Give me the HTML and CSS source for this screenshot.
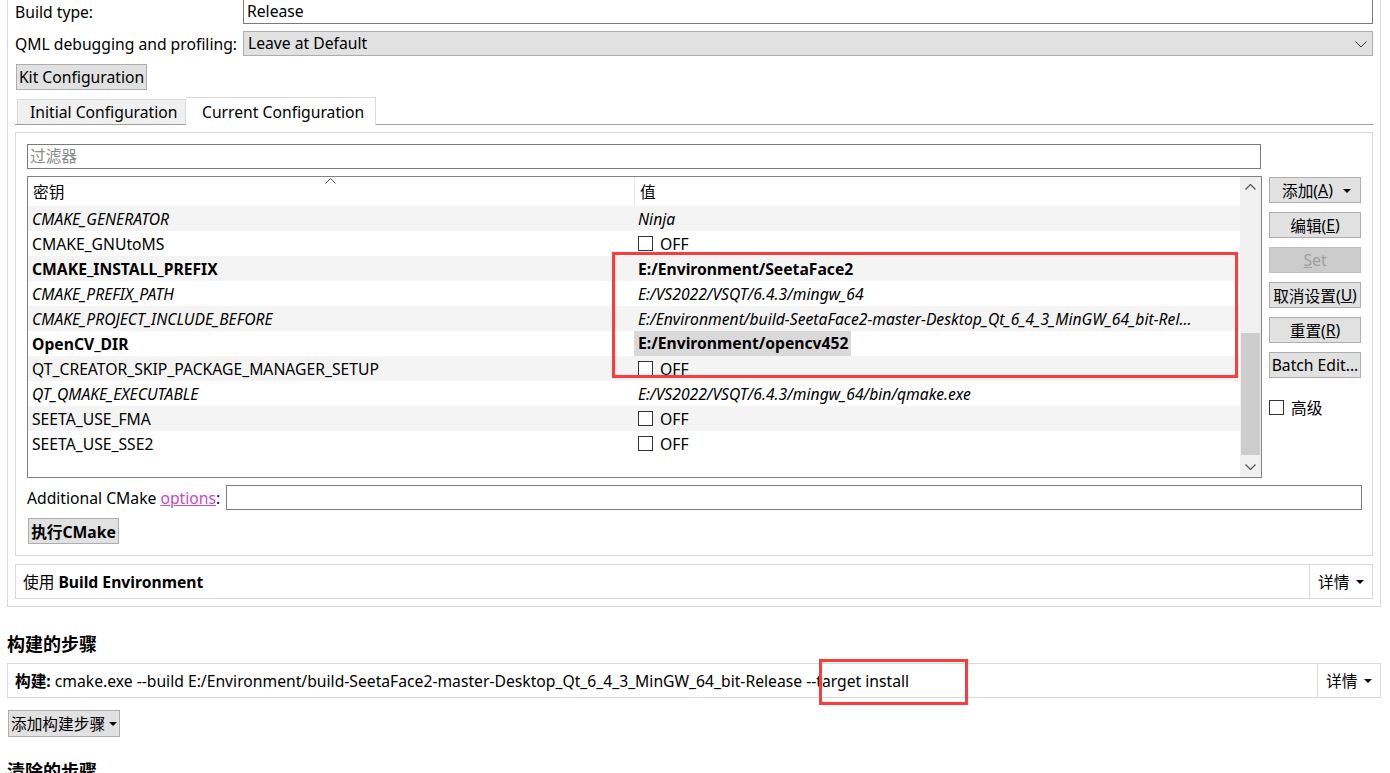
FILE: index.html
```html
<!DOCTYPE html>
<html lang="zh">
<head>
<meta charset="utf-8">
<link rel="stylesheet" href="styles.css">
</head>
<body>
<div class="page">
  <div class="group">
    <div class="form-row first">
      <div class="label">Build type:</div>
      <div class="lineedit">Release</div>
    </div>
    <div class="form-row qml">
      <div class="label">QML debugging and profiling:</div>
      <div class="combo">Leave at Default
        <svg class="chev" width="12" height="7" viewBox="0 0 12 7"><path d="M0.5 0.5 L6 6 L11.5 0.5" fill="none" stroke="#333" stroke-width="1"/></svg>
      </div>
    </div>
    <div class="kit-row"><div class="btn kit">Kit Configuration</div></div>
    <div class="tabbar">
      <div class="tab">Initial Configuration</div>
      <div class="tab active">Current Configuration</div>
    </div>
    <div class="pane">
      <div class="filter">过滤器</div>
      <div class="table-row">
        <div class="table">
          <div class="table-main">
            <div class="thead">
              <div class="th key">密钥
                <svg class="sort" width="11" height="6" viewBox="0 0 11 6"><path d="M0.5 5.5 L5.5 0.5 L10.5 5.5" fill="none" stroke="#555" stroke-width="1"/></svg>
              </div>
              <div class="th val">值</div>
            </div>
            <div class="tr alt"><div class="td key it">CMAKE_GENERATOR</div><div class="td val it">Ninja</div></div>
            <div class="tr"><div class="td key">CMAKE_GNUtoMS</div><div class="td val"><span class="cb"></span>OFF</div></div>
            <div class="tr alt"><div class="td key b">CMAKE_INSTALL_PREFIX</div><div class="td val b">E:/Environment/SeetaFace2</div></div>
            <div class="tr"><div class="td key it">CMAKE_PREFIX_PATH</div><div class="td val it">E:/VS2022/VSQT/6.4.3/mingw_64</div></div>
            <div class="tr alt"><div class="td key it">CMAKE_PROJECT_INCLUDE_BEFORE</div><div class="td val it">E:/Environment/build-SeetaFace2-master-Desktop_Qt_6_4_3_MinGW_64_bit-Rel...</div></div>
            <div class="tr"><div class="td key b">OpenCV_DIR</div><div class="td val b"><span class="sel">E:/Environment/opencv452</span></div></div>
            <div class="tr alt"><div class="td key">QT_CREATOR_SKIP_PACKAGE_MANAGER_SETUP</div><div class="td val"><span class="cb"></span>OFF</div></div>
            <div class="tr"><div class="td key it">QT_QMAKE_EXECUTABLE</div><div class="td val it">E:/VS2022/VSQT/6.4.3/mingw_64/bin/qmake.exe</div></div>
            <div class="tr alt"><div class="td key">SEETA_USE_FMA</div><div class="td val"><span class="cb"></span>OFF</div></div>
            <div class="tr"><div class="td key">SEETA_USE_SSE2</div><div class="td val"><span class="cb"></span>OFF</div></div>
          </div>
          <div class="scrollbar">
            <svg class="arrow" width="11" height="6" viewBox="0 0 11 6"><path d="M0.5 5.5 L5.5 0.5 L10.5 5.5" fill="none" stroke="#555" stroke-width="1.2"/></svg>
            <div class="track"><div class="thumb"></div></div>
            <svg class="arrow" width="11" height="6" viewBox="0 0 11 6"><path d="M0.5 0.5 L5.5 5.5 L10.5 0.5" fill="none" stroke="#555" stroke-width="1.2"/></svg>
          </div>
        </div>
        <div class="side">
          <div class="btn side-btn add">添加(<u>A</u>)<span class="tri"></span></div>
          <div class="btn side-btn">编辑(<u>E</u>)</div>
          <div class="btn side-btn disabled"><u>S</u>et</div>
          <div class="btn side-btn">取消设置(<u>U</u>)</div>
          <div class="btn side-btn">重置(<u>R</u>)</div>
          <div class="btn side-btn">Batch Edit...</div>
          <div class="adv"><span class="cb"></span>高级</div>
        </div>
      </div>
      <div class="opts-row">
        <div class="opts-label">Additional CMake <span class="link">options</span>:</div>
        <div class="lineedit opts"></div>
      </div>
      <div class="run-row"><div class="btn run">执行CMake</div></div>
    </div>
    <div class="detail-box env">
      <div class="detail-text">使用 <b>Build Environment</b></div>
      <div class="detail-btn">详情<span class="tri"></span></div>
    </div>
  </div>
  <h2 class="heading">构建的步骤</h2>
  <div class="detail-box step">
    <div class="detail-text"><b>构建:</b> cmake.exe --build E:/Environment/build-SeetaFace2-master-Desktop_Qt_6_4_3_MinGW_64_bit-Release --target install</div>
    <div class="detail-btn">详情<span class="tri"></span></div>
  </div>
  <div class="addstep-row"><div class="btn addstep">添加构建步骤<span class="tri"></span></div></div>
  <h2 class="heading clean">清除的步骤</h2>

  <div class="mark mark1"></div>
  <div class="mark mark2"></div>
</div>
</body>
</html>
```
FILE: styles.css
```css
* { box-sizing: border-box; }
html, body { margin: 0; padding: 0; background: #fff; overflow: hidden; }
body {
  font-family: "Noto Sans", "Noto Sans CJK SC", sans-serif;
  font-size: 15.7px;
  color: #000;
  width: 1390px;
  height: 773px;
}
.page { position: relative; height: 773px; overflow: hidden; }

.group {
  margin: -5px 0 0 7px;
  width: 1374px;
  border: 1px solid #d9d9d9;
  padding: 3px 7px 7px 7px;
}
.form-row { display: flex; align-items: center; }
.form-row .label { width: 228px; white-space: nowrap; }
.form-row.first { height: 25px; }
.lineedit {
  border: 1px solid #7a7a7a;
  background: #fff;
  height: 25px;
  line-height: 22px;
  padding-left: 3px;
}
.form-row .lineedit, .form-row .combo { flex: 1; }
.form-row.qml { margin-top: 7px; height: 25px; }
.combo {
  position: relative;
  height: 25px;
  line-height: 22px;
  background: #e1e1e1;
  border: 1px solid #adadad;
  padding-left: 4px;
}
.combo .chev { position: absolute; right: 5px; top: 9px; }

.btn {
  background: #e1e1e1;
  border: 1px solid #adadad;
  display: flex;
  align-items: center;
  justify-content: center;
  white-space: nowrap;
}
.kit-row { display: flex; margin-top: 8px; padding-left: 1px; }
.kit { height: 26px; width: 131px; }

.tabbar {
  margin-top: 8px;
  height: 27px;
  display: flex;
  align-items: flex-end;
  border-bottom: 1px solid #a0a0a0;
  padding-left: 2px;
}
.tab {
  height: 25px;
  border: 1px solid #d9d9d9;
  border-bottom: none;
  background: #f0f0f0;
  padding: 0 12px;
  display: flex;
  align-items: center;
  width: 169px;
  white-space: nowrap;
}
.tab.active {
  height: 28px;
  margin-bottom: -1px;
  background: #fff;
  width: 190px;
  padding-left: 16px;
  border-left: none;
}

.pane {
  margin-top: 7px;
  border: 1px solid #d9d9d9;
  padding: 11px 10px 11px 11px;
}
.filter {
  width: 1234px;
  height: 25px;
  border: 1px solid #7a7a7a;
  color: #8a8a8a;
  padding-left: 2px;
  line-height: 22px;
}
.table-row { display: flex; gap: 7px; margin-top: 7px; }
.table {
  width: 1235px;
  height: 302px;
  border: 1px solid #828282;
  display: flex;
}
.table-main { flex: 1; }
.thead { display: flex; height: 29px; }
.th { display: flex; align-items: center; position: relative; }
.th.key { width: 606px; padding-left: 5px; }
.th.val { flex: 1; padding-left: 5px; border-left: 1px solid #e5e5e5; }
.sort { position: absolute; left: 297px; top: 1px; }
.tr { display: flex; height: 25px; align-items: center; }
.tr.alt { background: #f4f4f4; }
.td { white-space: nowrap; overflow: hidden; }
.td.key { width: 606px; padding-left: 4px; }
.td.val { flex: 1; padding-left: 4px; display: flex; align-items: center; height: 25px; }
.it { font-style: italic; }
.b { font-weight: bold; }
.sel { background: #d9d9d9; display: inline-block; height: 25px; line-height: 24px; margin-left: -4px; padding: 0 3px 0 4px; }
.cb {
  display: inline-block;
  width: 15px;
  height: 15px;
  border: 1px solid #333;
  background: #fff;
  margin-right: 7px;
  flex: none;
}
.scrollbar {
  width: 21px;
  background: #f0f0f0;
  display: flex;
  flex-direction: column;
  align-items: center;
}
.scrollbar .arrow { margin: 7px 0; flex: none; }
.track { flex: 1; width: 100%; position: relative; }
.thumb { position: absolute; left: 1px; right: 1px; top: 136px; height: 122px; background: #cdcdcd; }

.side { width: 92px; display: flex; flex-direction: column; gap: 9px; padding-top: 1px; }
.side-btn { height: 26px; position: relative; }
.side-btn.add { justify-content: flex-start; padding-left: 12px; }
.side-btn.add .tri { position: absolute; right: 9px; top: 11px; }
.side-btn.disabled { background: #cccccc; color: #a0a0a0; border-color: #bfbfbf; }
.adv { display: flex; align-items: center; margin-top: 13px; height: 15px; }
.adv .cb { margin-right: 7px; }
.tri {
  display: inline-block;
  width: 0; height: 0;
  border-left: 4px solid transparent;
  border-right: 4px solid transparent;
  border-top: 4px solid #000;
}

.opts-row { display: flex; align-items: center; margin-top: 7px; height: 25px; gap: 6px; }
.opts-label { white-space: nowrap; }
.link { color: #c54cbd; text-decoration: underline; }
.lineedit.opts { flex: 1; }
.run-row { display: flex; margin-top: 8px; padding-left: 1px; }
.run { height: 26px; width: 91px; font-weight: bold; }

.detail-box {
  display: flex;
  border: 1px solid #d9d9d9;
  height: 35px;
  align-items: stretch;
}
.detail-box.env { margin-top: 8px; }
.detail-text { flex: 1; display: flex; align-items: center; padding-left: 7px; white-space: nowrap; gap: 4px; }
.detail-btn {
  width: 63px;
  border-left: 1px solid #d9d9d9;
  display: flex;
  align-items: center;
  padding-left: 8px;
  gap: 7px;
}
.heading {
  margin: 25px 0 0 7px;
  font-size: 18px;
  font-weight: bold;
  height: 24px;
  line-height: 24px;
}
.detail-box.step { margin: 7px 0 0 7px; width: 1374px; }
.detail-box.step .detail-text { padding-left: 7px; }
.addstep-row { display: flex; margin: 12px 0 0 8px; }
.addstep { height: 27px; width: 112px; gap: 4px; padding-left: 2px; justify-content: flex-start; }
.heading.clean { margin-top: 22px; }

.mark { position: absolute; border: 3px solid #fe3a3a; }
.mark1 { left: 612px; top: 252px; width: 626px; height: 126px; }
.mark2 { left: 819px; top: 659px; width: 149px; height: 46px; }
```
